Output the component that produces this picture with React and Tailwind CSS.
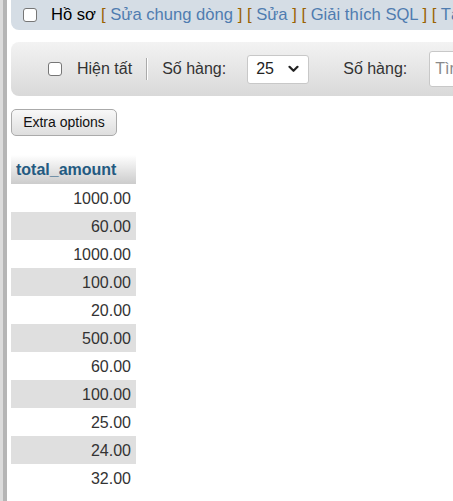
import React from "react";

const rows = ["1000.00","60.00","1000.00","100.00","20.00","500.00","60.00","100.00","25.00","24.00","32.00"];

function Br({ children }) {
  return <span className="text-[#9a6200]">{children}</span>;
}
function L({ children }) {
  return <span className="text-[#4f7cb0]">{children}</span>;
}

export default function App() {
  return (
    <div className="flex min-h-[501px] w-[453px] overflow-hidden bg-white font-['Liberation_Sans',Arial,sans-serif] text-[16px] text-[#333]">
      <div className="w-[3px] shrink-0 bg-[#dcdcdc]" />
      <div className="w-[4px] shrink-0 bg-[#b5b5b5]" />
      <div className="min-w-0 flex-1 pl-[4px]">
        <div className="flex h-[30px] w-[600px] items-center whitespace-nowrap rounded-bl-[8px] bg-[#d5dde5] pl-[12px] text-[16.6px]">
          <span className="h-[14px] w-[14px] shrink-0 rounded-[3px] border border-[#767676] bg-white" />
          <span className="ml-[14px] text-black">Hồ sơ</span>
          <span className="ml-[5px]"><Br>[</Br> <L>Sửa chung dòng</L> <Br>]</Br> <Br>[</Br> <L>Sửa</L> <Br>]</Br> <Br>[</Br> <L>Giải thích SQL</L> <Br>]</Br> <Br>[</Br> <L>Tạo mã PHP</L> <Br>]</Br></span>
        </div>
        <div className="mt-[12px] flex h-[54px] w-[600px] items-center whitespace-nowrap rounded-[8px] bg-gradient-to-b from-[#f3f3f3] to-[#d9d9d9] pl-[37px] text-[#333]">
          <span className="h-[14px] w-[14px] shrink-0 rounded-[3px] border border-[#767676] bg-white" />
          <span className="ml-[15px]">Hiện tất</span>
          <span className="ml-[14px] h-[22px] w-[2px] border-l border-[#aaa] bg-white" />
          <span className="ml-[14px]">Số hàng:</span>
          <div className="ml-[21px] flex h-[29px] w-[62px] items-center justify-between rounded-[3px] border border-[#c8c8c8] bg-white pl-[8px] pr-[9px]">
            <span className="text-[#222]">25</span>
            <svg width="11" height="8" viewBox="0 0 11 8" fill="none">
              <path d="M1.5 1.8 L5.5 5.8 L9.5 1.8" stroke="#222" strokeWidth="2.2" strokeLinecap="round" strokeLinejoin="round" />
            </svg>
          </div>
          <span className="ml-[34px]">Số hàng:</span>
          <div className="ml-[22px] flex h-[36px] w-[150px] items-center rounded-[3px] border border-[#c8c8c8] bg-white pl-[5px] text-[#8a8a8a]">
            Tìm kiếm
          </div>
        </div>
        <div className="mt-[13px]">
          <button className="h-[27px] w-[106px] rounded-[5px] border border-[#aaa] bg-gradient-to-b from-[#f8f8f8] to-[#dedede] text-[14px] text-[#111]">
            Extra options
          </button>
        </div>
        <div className="mt-[19px] w-[125px]">
          <div className="flex h-[29px] items-center bg-gradient-to-b from-white to-[#cccccc] pl-[5px] font-bold text-[#235a81]">
            total_amount
          </div>
          {rows.map((r, i) => (
            <div
              key={i}
              className={`flex h-[28px] items-center justify-end pr-[5px] pt-[2px] text-[#333] ${i % 2 === 1 ? "bg-[#dfdfdf]" : "bg-white"}`}
            >
              {r}
            </div>
          ))}
        </div>
      </div>
    </div>
  );
}
